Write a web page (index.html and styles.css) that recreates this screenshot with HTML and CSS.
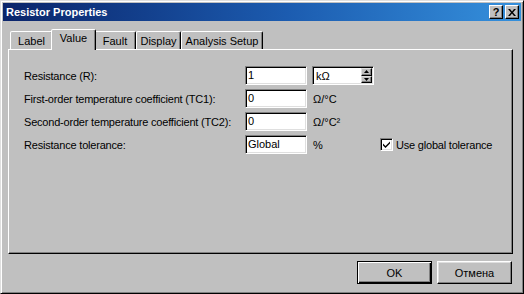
FILE: index.html
```html
<!DOCTYPE html>
<html>
<head>
<meta charset="utf-8">
<link rel="stylesheet" href="styles.css">
</head>
<body>
<div class="window">
  <div class="titlebar">
    <span class="title">Resistor Properties</span>
    <div class="tbtns">
      <div class="tbtn help">?</div>
      <div class="tbtn close">
        <svg width="8" height="7" viewBox="0 0 8 7"><path d="M0 0h2l2 2.5L6 0h2L5 3.5 8 7H6L4 4.5 2 7H0l3-3.5z" fill="#000"/></svg>
      </div>
    </div>
  </div>
  <div class="content">
    <div class="tabs">
      <div class="tab t-label">Label</div>
      <div class="tab t-value active">Value</div>
      <div class="tab t-fault">Fault</div>
      <div class="tab t-display">Display</div>
      <div class="tab t-analysis">Analysis Setup</div>
    </div>
    <div class="panel">
      <div class="form">
        <div class="lbl">Resistance (R):</div>
        <div class="field">1</div>
        <div class="unitcell">
          <div class="spin">
            <span class="spin-text">kΩ</span>
            <div class="spin-btns">
              <div class="sbtn"><svg width="5" height="3" viewBox="0 0 5 3"><path d="M2.5 0L5 3H0z" fill="#000"/></svg></div>
              <div class="sbtn"><svg width="5" height="3" viewBox="0 0 5 3"><path d="M0 0h5L2.5 3z" fill="#000"/></svg></div>
            </div>
          </div>
        </div>
        <div></div>

        <div class="lbl">First-order temperature coefficient (TC1):</div>
        <div class="field">0</div>
        <div class="unit">Ω/°C</div>
        <div></div>

        <div class="lbl">Second-order temperature coefficient (TC2):</div>
        <div class="field">0</div>
        <div class="unit">Ω/°C²</div>
        <div></div>

        <div class="lbl">Resistance tolerance:</div>
        <div class="field">Global</div>
        <div class="unit">%</div>
        <div class="check">
          <div class="cbox"><svg width="7" height="7" viewBox="0 0 7 7"><path d="M0 2.5l2.5 2.5L7 0.5v2L2.5 7 0 4.5z" fill="#000"/></svg></div>
          <span class="check-text">Use global tolerance</span>
        </div>
      </div>
    </div>
    <div class="actions">
      <div class="btn default">OK</div>
      <div class="btn">Отмена</div>
    </div>
  </div>
</div>
</body>
</html>
```

FILE: styles.css
```css
html, body {
  margin: 0;
  padding: 0;
  background: #c0c0c0;
}
body {
  font-family: "Liberation Sans", Arial, sans-serif;
  font-size: 11px;
  color: #000;
}
.window {
  box-sizing: border-box;
  width: 524px;
  height: 294px;
  background: #c0c0c0;
  border: 1px solid;
  border-color: #dfdfdf #000 #000 #dfdfdf;
  box-shadow: inset 1px 1px #fff, inset -1px -1px #808080;
  padding: 2px;
}
.titlebar {
  height: 18px;
  display: flex;
  align-items: center;
  justify-content: space-between;
  padding: 0 2px 0 3px;
  background: linear-gradient(90deg, #0a246a 0%, #1c5cb0 55%, #3590dc 100%);
}
.title {
  color: #fff;
  font-weight: bold;
  font-size: 11px;
}
.tbtns {
  display: flex;
  gap: 2px;
}
.tbtn {
  box-sizing: border-box;
  width: 14px;
  height: 14px;
  background: #c0c0c0;
  border: 1px solid;
  border-color: #fff #000 #000 #fff;
  box-shadow: inset -1px -1px #808080;
  display: flex;
  align-items: center;
  justify-content: center;
  font-weight: bold;
  font-size: 11px;
  line-height: 12px;
}
.content {
  padding: 8px 0 0 5px;
}
.tabs {
  display: flex;
  align-items: flex-end;
  height: 20px;
  padding-left: 2px;
}
.tab {
  box-sizing: border-box;
  height: 18px;
  border: 1px solid;
  border-bottom: none;
  border-color: #fff #000 transparent #fff;
  border-radius: 2px 2px 0 0;
  box-shadow: inset -1px 0 #808080;
  background: #c0c0c0;
  text-align: center;
  line-height: 16px;
  padding-top: 1px;
}
.t-label { width: 43px; }
.t-value { width: 45px; }
.t-fault { width: 42px; }
.t-display { width: 45px; }
.t-analysis { width: 82px; }
.tab.active {
  height: 21px;
  margin: 0 -2px -1px -2px;
  position: relative;
  z-index: 1;
  padding-top: 0;
  line-height: 17px;
}
.panel {
  box-sizing: border-box;
  width: 505px;
  height: 205px;
  border: 1px solid;
  border-color: #fff #000 #000 #fff;
  box-shadow: inset -1px -1px #808080;
  padding: 16px 0 0 15px;
}
.form {
  display: grid;
  grid-template-columns: 221px 62px 68px auto;
  grid-template-rows: 19px 19px 19px 19px;
  row-gap: 4px;
  align-items: center;
}
.lbl {
  white-space: nowrap;
  letter-spacing: -0.2px;
}
.field {
  box-sizing: border-box;
  height: 19px;
  width: 62px;
  background: #fff;
  border: 1px solid;
  border-color: #808080 #fff #fff #808080;
  box-shadow: inset 1px 1px #000, inset -1px -1px #dfdfdf;
  padding: 0 2px;
  line-height: 17px;
  white-space: nowrap;
}
.unit {
  padding-left: 6px;
}
.unitcell {
  padding-left: 5px;
}
.spin {
  box-sizing: border-box;
  height: 19px;
  width: 62px;
  background: #fff;
  border: 1px solid;
  border-color: #808080 #fff #fff #808080;
  box-shadow: inset 1px 1px #000, inset -1px -1px #dfdfdf;
  padding: 1px 1px 1px 3px;
  display: flex;
  align-items: stretch;
  justify-content: space-between;
}
.spin-text {
  line-height: 15px;
  padding-top: 1px;
}
.spin-btns {
  width: 11px;
  display: flex;
  flex-direction: column;
}
.sbtn {
  box-sizing: border-box;
  flex: 1;
  background: #c0c0c0;
  border: 1px solid;
  border-color: #dfdfdf #000 #000 #dfdfdf;
  box-shadow: inset -1px -1px #808080;
  display: flex;
  align-items: center;
  justify-content: center;
}
.check {
  display: flex;
  align-items: center;
  padding-left: 5px;
  gap: 3px;
  white-space: nowrap;
}
.check-text {
  letter-spacing: -0.2px;
}
.cbox {
  box-sizing: border-box;
  width: 13px;
  height: 13px;
  background: #fff;
  border: 1px solid;
  border-color: #808080 #fff #fff #808080;
  box-shadow: inset 1px 1px #000, inset -1px -1px #dfdfdf;
  display: flex;
  align-items: center;
  justify-content: center;
}
.actions {
  width: 505px;
  display: flex;
  justify-content: flex-end;
  gap: 5px;
  padding-top: 7px;
  padding-right: 1px;
  box-sizing: border-box;
}
.btn {
  box-sizing: border-box;
  width: 75px;
  height: 23px;
  border: 1px solid;
  border-color: #fff #000 #000 #fff;
  box-shadow: inset -1px -1px #808080, inset 1px 1px #dfdfdf;
  display: flex;
  align-items: center;
  justify-content: center;
}
.btn.default {
  border-color: #000;
  box-shadow: inset 1px 1px #fff, inset -1px -1px #000, inset -2px -2px #808080;
}
```
